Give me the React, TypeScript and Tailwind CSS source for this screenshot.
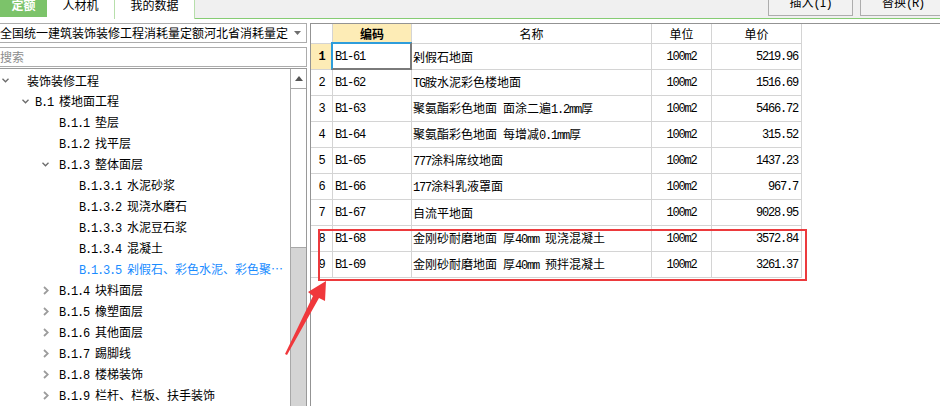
import React from 'react';

const latin = "font-['Liberation_Mono',monospace] tracking-[-1.2px]";

// ascii runs get the narrow mono face, like the half-width glyphs of the original
const seg = (s: string) => (
  <span className="whitespace-pre">
    {s
      .split(/([\x20-\x7E]+)/)
      .filter(Boolean)
      .map((p, i) =>
        /^[\x20-\x7E]+$/.test(p) ? (
          <span key={i} className={latin}>
            {p}
          </span>
        ) : (
          <span key={i}>{p}</span>
        )
      )}
  </span>
);

type TreeItem = {
  pad: string;
  box?: string;
  icon?: 'down' | 'right';
  text: string;
  active?: boolean;
};

const tree: TreeItem[] = [
  { pad: 'pl-[2px]', box: 'w-[25px]', icon: 'down', text: '装饰装修工程' },
  { pad: 'pl-[22px]', box: 'w-[13px]', icon: 'down', text: 'B.1 楼地面工程' },
  { pad: 'pl-[59px]', text: 'B.1.1 垫层' },
  { pad: 'pl-[59px]', text: 'B.1.2 找平层' },
  { pad: 'pl-[42px]', box: 'w-[17px]', icon: 'down', text: 'B.1.3 整体面层' },
  { pad: 'pl-[79px]', text: 'B.1.3.1 水泥砂浆' },
  { pad: 'pl-[79px]', text: 'B.1.3.2 现浇水磨石' },
  { pad: 'pl-[79px]', text: 'B.1.3.3 水泥豆石浆' },
  { pad: 'pl-[79px]', text: 'B.1.3.4 混凝土' },
  { pad: 'pl-[79px]', text: 'B.1.3.5 剁假石、彩色水泥、彩色聚…', active: true },
  { pad: 'pl-[43px]', box: 'w-[16px]', icon: 'right', text: 'B.1.4 块料面层' },
  { pad: 'pl-[43px]', box: 'w-[16px]', icon: 'right', text: 'B.1.5 橡塑面层' },
  { pad: 'pl-[43px]', box: 'w-[16px]', icon: 'right', text: 'B.1.6 其他面层' },
  { pad: 'pl-[43px]', box: 'w-[16px]', icon: 'right', text: 'B.1.7 踢脚线' },
  { pad: 'pl-[43px]', box: 'w-[16px]', icon: 'right', text: 'B.1.8 楼梯装饰' },
  { pad: 'pl-[43px]', box: 'w-[16px]', icon: 'right', text: 'B.1.9 栏杆、栏板、扶手装饰' },
];

const rows = [
  ['B1-61', '剁假石地面', '5219.96'],
  ['B1-62', 'TG胺水泥彩色楼地面', '1516.69'],
  ['B1-63', '聚氨酯彩色地面 面涂二遍1.2mm厚', '5466.72'],
  ['B1-64', '聚氨酯彩色地面 每增减0.1mm厚', '315.52'],
  ['B1-65', '777涂料席纹地面', '1437.23'],
  ['B1-66', '177涂料乳液罩面', '967.7'],
  ['B1-67', '自流平地面', '9028.95'],
  ['B1-68', '金刚砂耐磨地面 厚40mm 现浇混凝土', '3572.84'],
  ['B1-69', '金刚砂耐磨地面 厚40mm 预拌混凝土', '3261.37'],
];

const ChevronDown = () => (
  <svg width="7" height="5" viewBox="0 0 7 5">
    <path d="M0.5 0.8 L3.5 3.8 L6.5 0.8" stroke="#6b6b6b" strokeWidth="1.3" fill="none" />
  </svg>
);

const ChevronRight = () => (
  <svg width="6" height="9" viewBox="0 0 6 9">
    <path d="M1 1 L4.8 4.5 L1 8" stroke="#9c9c9c" strokeWidth="1.8" fill="none" />
  </svg>
);

const cell = 'h-full flex items-center border-r border-[#d4d4d4]';

const App: React.FC = () => {
  return (
    <div className="relative w-[940px] h-[406px] overflow-hidden bg-white text-[12px] leading-none text-black font-['Noto_Sans_CJK_SC',sans-serif]">
      {/* tab bar, cut at the top like the original */}
      <div className="flex h-[19px]">
        <div className="w-[47px] h-[17px] bg-[#7cc36a] flex items-end justify-center pb-[6px] overflow-hidden">
          <span className="leading-[12px] font-bold text-white">定额</span>
        </div>
        <div className="w-[68px] h-[19px] bg-white border-r border-[#b7dfab] flex items-end justify-center pb-[8px] overflow-hidden">
          <span className="leading-[12px]">人材机</span>
        </div>
        <div className="w-[80px] h-[19px] bg-white border-r border-[#b7dfab] flex items-end justify-center pb-[8px] overflow-hidden">
          <span className="leading-[12px]">我的数据</span>
        </div>
        <div className="flex-1 h-[19px] bg-[#f0f0f0] border-b border-[#86cc74] flex justify-end items-start gap-[7px]">
          <div className="w-[85px] h-[16px] bg-[#f2f2f2] border border-t-0 border-[#adadad] flex items-end justify-center pb-[5px] overflow-hidden">
            <span className="leading-[12px]">插入{seg('(I)')}</span>
          </div>
          <div className="w-[86px] h-[16px] -mr-[6px] bg-[#f2f2f2] border border-t-0 border-[#adadad] flex items-end justify-center pb-[5px] overflow-hidden">
            <span className="leading-[12px]">替换{seg('(R)')}</span>
          </div>
        </div>
      </div>

      <div className="flex mt-[4px] h-[383px]">
        {/* left panel */}
        <div className="w-[307px] flex flex-col">
          <div className="h-[21px] border border-l-0 border-[#acacac] flex items-center">
            <div className="w-[288px] overflow-hidden whitespace-nowrap">全国统一建筑装饰装修工程消耗量定额河北省消耗量定额</div>
            <div className="flex-1 flex justify-center">
              <svg width="7" height="4" viewBox="0 0 7 4">
                <path d="M0 0 H7 L3.5 4 Z" fill="#6e6e6e" />
              </svg>
            </div>
          </div>
          <div className="mt-[4px] h-[22px] border border-l-0 border-[#acacac] flex items-center text-[#8c8c8c]">搜索</div>
          <div className="mt-[1px] flex-1 flex border-t border-r border-[#9a9a9a]">
            <div className="flex-1 pt-[1px]">
              {tree.map((t, i) => (
                <div
                  key={i}
                  className={`h-[21px] flex items-center whitespace-nowrap ${t.pad} ${t.active ? 'text-[#1a8cff]' : ''}`}
                >
                  {t.icon && (
                    <span className={`${t.box} flex items-center`}>
                      {t.icon === 'down' ? <ChevronDown /> : <ChevronRight />}
                    </span>
                  )}
                  {seg(t.text)}
                </div>
              ))}
            </div>
            <div className="w-[16px] flex flex-col border-l border-[#a8a8a8]">
              <div className="h-[20px] bg-white border-b border-[#a8a8a8] flex items-center justify-center">
                <svg width="8" height="5" viewBox="0 0 8 5">
                  <path d="M0 5 L4 0 L8 5 Z" fill="#555" />
                </svg>
              </div>
              <div className="h-[159px] bg-white border-b border-[#a8a8a8]" />
              <div className="flex-1 bg-[#d4d4d4]" />
            </div>
          </div>
        </div>

        {/* splitter */}
        <div className="w-[3px] bg-white" />

        {/* right panel */}
        <div className="flex-1 border-l border-t border-[#939393]">
          <div className="w-[491px]">
            <div className="flex h-[20px] border-b border-[#d4d4d4]">
              <div className={`${cell} w-[22px]`} />
              <div className={`${cell} w-[79px] justify-center bg-[#fdecb6] font-bold`}>编码</div>
              <div className={`${cell} w-[240px] justify-center`}>名称</div>
              <div className={`${cell} w-[60px] justify-center`}>单位</div>
              <div className={`${cell} w-[90px] justify-center`}>单价</div>
            </div>
            {rows.map((r, i) => (
              <div key={i} className="flex h-[26px] border-b border-[#d4d4d4]">
                <div
                  className={`${cell} w-[22px] justify-center ${latin} ${i === 0 ? 'bg-[#fdecb6] font-bold' : ''}`}
                >
                  {i + 1}
                </div>
                <div className={`${cell} w-[79px] pl-[2px] relative`}>
                  <span className={latin}>{r[0]}</span>
                  {i === 0 && (
                    <div className="absolute -left-[2px] -top-[2px] -right-px -bottom-px border-2 border-[#2e9ddb] border-r-[#7a7a7a] border-b-[#7a7a7a]" />
                  )}
                </div>
                <div className={`${cell} w-[240px] pl-[1px] whitespace-nowrap`}>{seg(r[1])}</div>
                <div className={`${cell} w-[60px] justify-center`}>
                  <span className={latin}>100m2</span>
                </div>
                <div className={`${cell} w-[90px] justify-end pr-[3px]`}>
                  <span className={latin}>{r[2]}</span>
                </div>
              </div>
            ))}
          </div>
        </div>
      </div>

      {/* annotation */}
      <div className="absolute left-[318px] top-[229px] w-[489px] h-[52px] border-2 border-[#ec3a3d]" />
      <svg className="absolute left-0 top-0 pointer-events-none" width="940" height="406" viewBox="0 0 940 406">
        <polygon points="285,354 313,296 308,292 326,281 325,301 319,298 287,355" fill="#f0383c" />
      </svg>
    </div>
  );
};

export default App;
